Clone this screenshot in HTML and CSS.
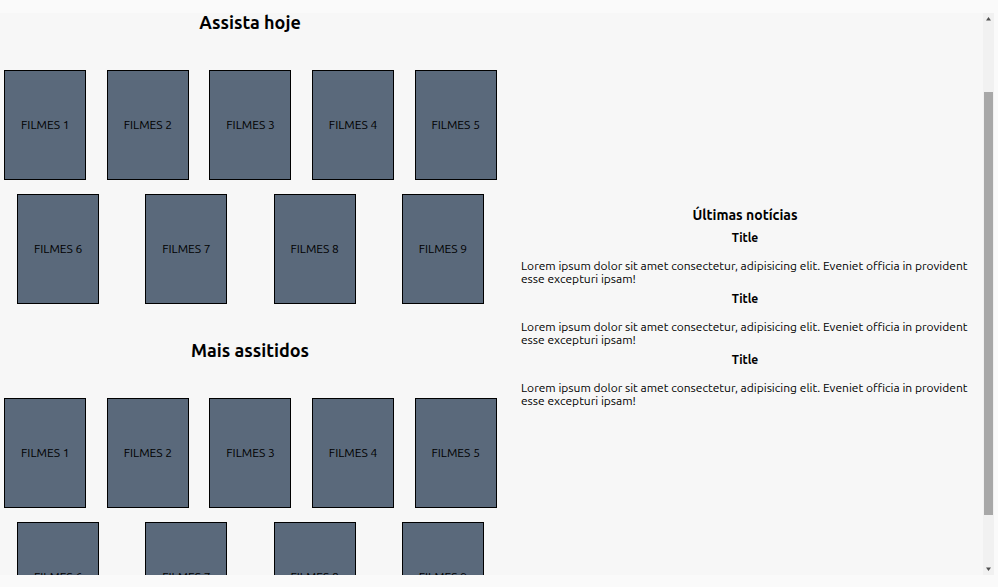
FILE: index.html
```html
<!DOCTYPE html>
<html lang="pt-BR">
<head>
<meta charset="utf-8">
<meta name="viewport" content="width=device-width, initial-scale=1">
<title>Filmes</title>
<link rel="stylesheet" href="styles.css">
</head>
<body>
<div class="frame">
  <main class="content">
    <div class="movies">
      <section class="group">
        <h1 class="group-title">Assista hoje</h1>
        <div class="rows">
          <div class="row">
            <article class="card">FILMES 1</article>
            <article class="card">FILMES 2</article>
            <article class="card">FILMES 3</article>
            <article class="card">FILMES 4</article>
            <article class="card">FILMES 5</article>
          </div>
          <div class="row">
            <article class="card">FILMES 6</article>
            <article class="card">FILMES 7</article>
            <article class="card">FILMES 8</article>
            <article class="card">FILMES 9</article>
          </div>
        </div>
      </section>
      <section class="group">
        <h1 class="group-title">Mais assitidos</h1>
        <div class="rows">
          <div class="row">
            <article class="card">FILMES 1</article>
            <article class="card">FILMES 2</article>
            <article class="card">FILMES 3</article>
            <article class="card">FILMES 4</article>
            <article class="card">FILMES 5</article>
          </div>
          <div class="row">
            <article class="card">FILMES 6</article>
            <article class="card">FILMES 7</article>
            <article class="card">FILMES 8</article>
            <article class="card">FILMES 9</article>
          </div>
        </div>
      </section>
    </div>
    <aside class="news">
      <h2 class="news-heading">Últimas notícias</h2>
      <article class="story">
        <h3 class="story-title">Title</h3>
        <p class="story-text">Lorem ipsum dolor sit amet consectetur, adipisicing elit. Eveniet officia in provident esse excepturi ipsam!</p>
      </article>
      <article class="story">
        <h3 class="story-title">Title</h3>
        <p class="story-text">Lorem ipsum dolor sit amet consectetur, adipisicing elit. Eveniet officia in provident esse excepturi ipsam!</p>
      </article>
      <article class="story">
        <h3 class="story-title">Title</h3>
        <p class="story-text">Lorem ipsum dolor sit amet consectetur, adipisicing elit. Eveniet officia in provident esse excepturi ipsam!</p>
      </article>
    </aside>
  </main>
  <div class="scrollbar" aria-hidden="true">
    <svg class="arrow" viewBox="0 0 11 11"><path d="M3 7.500h5L5.500 4z"/></svg>
    <div class="track"><div class="thumb"></div></div>
    <svg class="arrow" viewBox="0 0 11 11"><path d="M3 3.500h5L5.500 7z"/></svg>
  </div>
</div>
</body>
</html>
```
FILE: styles.css
```css
* {
  box-sizing: border-box;
}

body {
  margin: 0;
  height: 100vh;
  padding: 13px 4px 12px 0;
  background: #fafafa;
  color: #000;
  font-family: Ubuntu, "Noto Sans", sans-serif;
  font-size: 12px;
  line-height: 13px;
  overflow: hidden;
}

h1,
h2,
h3,
p {
  margin: 0;
}

.frame {
  display: flex;
  height: 100%;
  background: #f7f7f7;
}

.content {
  flex: 1;
  display: grid;
  grid-template-columns: 500fr 483fr;
  min-width: 0;
  overflow: hidden;
}

.movies {
  display: flex;
  flex-direction: column;
  gap: 37px;
  min-width: 0;
}

.group-title {
  margin-bottom: 39px;
  font-size: 18px;
  line-height: 18px;
  text-align: center;
}

.rows {
  display: flex;
  flex-direction: column;
  gap: 14px;
  margin: 0 -7px 0 -6px;
}

.row {
  display: flex;
  justify-content: space-around;
}

.card {
  display: flex;
  align-items: center;
  justify-content: center;
  width: 82px;
  height: 110px;
  padding-bottom: 2px;
  border: 1px solid #000;
  background: #5a697b;
}

.news {
  padding: 194px 14px 0 21px;
}

.news-heading {
  margin-bottom: 7px;
  font-size: 14px;
  line-height: 16px;
  text-align: center;
}

.story {
  margin-bottom: 6px;
}

.story-title {
  margin-bottom: 13px;
  font-size: 12px;
  line-height: 16px;
  text-align: center;
}

.scrollbar {
  display: flex;
  flex-direction: column;
  width: 11px;
  background: #f1f1f1;
}

.arrow {
  width: 11px;
  height: 11px;
  fill: #505050;
}

.track {
  flex: 1;
  padding: 68px 1px 49px;
  display: flex;
}

.thumb {
  flex: 1;
  background: #a8a8a8;
}
```
